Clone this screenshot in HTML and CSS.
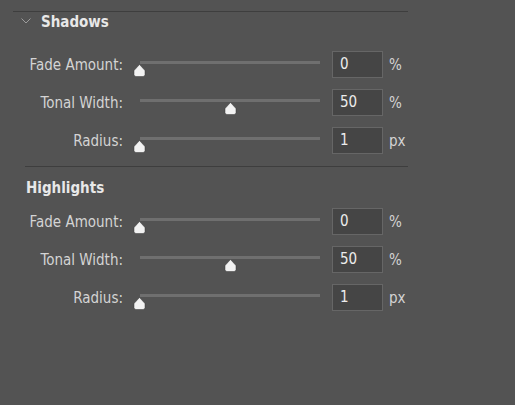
FILE: index.html
```html
<!DOCTYPE html>
<html>
<head>
<meta charset="utf-8">
<link rel="stylesheet" href="styles.css">
</head>
<body>
<div class="panel">
  <div class="rule-top"></div>
  <div class="section-head">
    <svg class="chev" width="10" height="6" viewBox="0 0 10 6"><polyline points="0.5,0.5 5,5 9.5,0.5" fill="none" stroke="#9c9c9c" stroke-width="1"/></svg>
    <span class="title">Shadows</span>
  </div>
  <div class="rows">
    <div class="row">
      <span class="label">Fade Amount:</span>
      <div class="slider"><div class="track"></div><svg class="thumb" style="left:-7px" width="13" height="13" viewBox="0 0 13 13"><path d="M6.5 0.5 L12 6.5 V10.5 Q12 12.5 10 12.5 H3 Q1 12.5 1 10.5 V6.5 Z" /></svg></div>
      <div class="box">0</div>
      <span class="unit">%</span>
    </div>
    <div class="row">
      <span class="label">Tonal Width:</span>
      <div class="slider"><div class="track"></div><svg class="thumb" style="left:84px" width="13" height="13" viewBox="0 0 13 13"><path d="M6.5 0.5 L12 6.5 V10.5 Q12 12.5 10 12.5 H3 Q1 12.5 1 10.5 V6.5 Z" /></svg></div>
      <div class="box">50</div>
      <span class="unit">%</span>
    </div>
    <div class="row">
      <span class="label">Radius:</span>
      <div class="slider"><div class="track"></div><svg class="thumb" style="left:-7px" width="13" height="13" viewBox="0 0 13 13"><path d="M6.5 0.5 L12 6.5 V10.5 Q12 12.5 10 12.5 H3 Q1 12.5 1 10.5 V6.5 Z" /></svg></div>
      <div class="box">1</div>
      <span class="unit">px</span>
    </div>
  </div>
  <div class="rule-mid"></div>
  <div class="section-head2"><span class="title">Highlights</span></div>
  <div class="rows rows2">
    <div class="row">
      <span class="label">Fade Amount:</span>
      <div class="slider"><div class="track"></div><svg class="thumb" style="left:-7px" width="13" height="13" viewBox="0 0 13 13"><path d="M6.5 0.5 L12 6.5 V10.5 Q12 12.5 10 12.5 H3 Q1 12.5 1 10.5 V6.5 Z" /></svg></div>
      <div class="box">0</div>
      <span class="unit">%</span>
    </div>
    <div class="row">
      <span class="label">Tonal Width:</span>
      <div class="slider"><div class="track"></div><svg class="thumb" style="left:84px" width="13" height="13" viewBox="0 0 13 13"><path d="M6.5 0.5 L12 6.5 V10.5 Q12 12.5 10 12.5 H3 Q1 12.5 1 10.5 V6.5 Z" /></svg></div>
      <div class="box">50</div>
      <span class="unit">%</span>
    </div>
    <div class="row">
      <span class="label">Radius:</span>
      <div class="slider"><div class="track"></div><svg class="thumb" style="left:-7px" width="13" height="13" viewBox="0 0 13 13"><path d="M6.5 0.5 L12 6.5 V10.5 Q12 12.5 10 12.5 H3 Q1 12.5 1 10.5 V6.5 Z" /></svg></div>
      <div class="box">1</div>
      <span class="unit">px</span>
    </div>
  </div>
</div>
</body>
</html>
```

FILE: styles.css
```css
html, body {
  margin: 0;
  padding: 0;
  background: #535353;
  width: 515px;
  height: 405px;
  overflow: hidden;
}
.panel {
  padding-top: 11px;
  font-family: "DejaVu Sans Condensed", "DejaVu Sans", sans-serif;
  font-size: 15px;
  color: #d4d4d4;
}
.rule-top {
  margin-left: 13px;
  width: 395px;
  height: 1px;
  background: #3e3e3e;
}
.section-head {
  display: flex;
  align-items: center;
  height: 20px;
  margin-top: 0;
}
.chev {
  margin-left: 21px;
  margin-right: 10px;
  margin-top: -2px;
}
.title {
  font-weight: 700;
  font-size: 15px;
  color: #e8e8e8;
}
.rows {
  display: flex;
  flex-direction: column;
  gap: 11px;
  margin-top: 19px;
}
.row {
  display: flex;
  align-items: center;
  height: 27px;
}
.label {
  width: 123px;
  text-align: right;
  flex: none;
}
.slider {
  position: relative;
  width: 180px;
  height: 27px;
  margin-left: 17px;
  flex: none;
}
.track {
  margin-top: 10px;
  height: 3px;
  background: #6f6f6f;
}
.thumb {
  position: absolute;
  top: 13px;
}
.thumb path {
  fill: #f2f2f2;
  stroke: #3a3a3a;
  stroke-width: 1;
  stroke-opacity: 0.5;
}
.box {
  box-sizing: border-box;
  width: 51px;
  height: 27px;
  margin-left: 12px;
  padding-left: 7px;
  border: 1px solid #666666;
  background: #454545;
  color: #ececec;
  line-height: 25px;
  flex: none;
}
.unit {
  margin-left: 6px;
}
.rule-mid {
  margin-top: 12px;
  margin-left: 25px;
  width: 383px;
  height: 1px;
  background: #3e3e3e;
}
.section-head2 {
  margin-top: 11px;
  margin-left: 26px;
  height: 20px;
  line-height: 20px;
}
.rows2 {
  margin-top: 10px;
}
```
